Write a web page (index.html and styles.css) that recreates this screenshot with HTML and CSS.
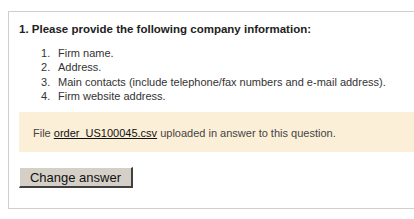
FILE: index.html
```html
<!DOCTYPE html>
<html>
<head>
<meta charset="utf-8">
<link rel="stylesheet" href="styles.css">
</head>
<body>
<div class="panel">
  <h3 class="question">1. Please provide the following company information:</h3>
  <ol class="items">
    <li>Firm name.</li>
    <li>Address.</li>
    <li>Main contacts (include telephone/fax numbers and e-mail address).</li>
    <li>Firm website address.</li>
  </ol>
  <div class="notice">File <a class="file" href="#">order_US100045.csv</a> uploaded in answer to this question.</div>
  <button class="change" type="button">Change answer</button>
</div>
</body>
</html>
```
FILE: styles.css
```css
html, body {
  margin: 0;
  padding: 0;
  background: #ffffff;
  overflow: hidden;
}
body {
  padding: 11px 0 0 8px;
  font-family: "Liberation Sans", Arial, sans-serif;
  color: #333333;
}
.panel {
  border-top: 1px solid #cfcfcf;
  border-left: 1px solid #cfcfcf;
  border-bottom: 1px solid #cfcfcf;
  margin-right: -20px;
  padding: 10px 0 20px 10px;
}
.question {
  margin: 0;
  font-size: 11.5px;
  line-height: 15px;
  font-weight: bold;
  color: #222222;
}
.items {
  margin: 9px 0 0 0;
  padding: 0 0 0 39px;
  list-style: none;
  counter-reset: item;
  font-size: 11px;
  line-height: 14.3px;
}
.items li {
  counter-increment: item;
}
.items li::before {
  content: counter(item) ".";
  display: inline-block;
  width: 17px;
  margin-left: -17px;
}
.notice {
  margin-top: 9px;
  background: #fcefd7;
  padding: 15px 14px 12px 14px;
  font-size: 11px;
  line-height: 13px;
  color: #444444;
}
.file {
  color: #111111;
  text-decoration: underline;
}
.change {
  margin-top: 15px;
  display: block;
  width: 114px;
  height: 21px;
  padding: 0;
  font-family: "Liberation Sans", Arial, sans-serif;
  font-size: 13px;
  color: #111111;
  background: #d4d0c8;
  border-style: solid;
  border-width: 1px 2px 2px 1px;
  border-color: #ffffff #404040 #404040 #ffffff;
  border-radius: 0;
}
```
